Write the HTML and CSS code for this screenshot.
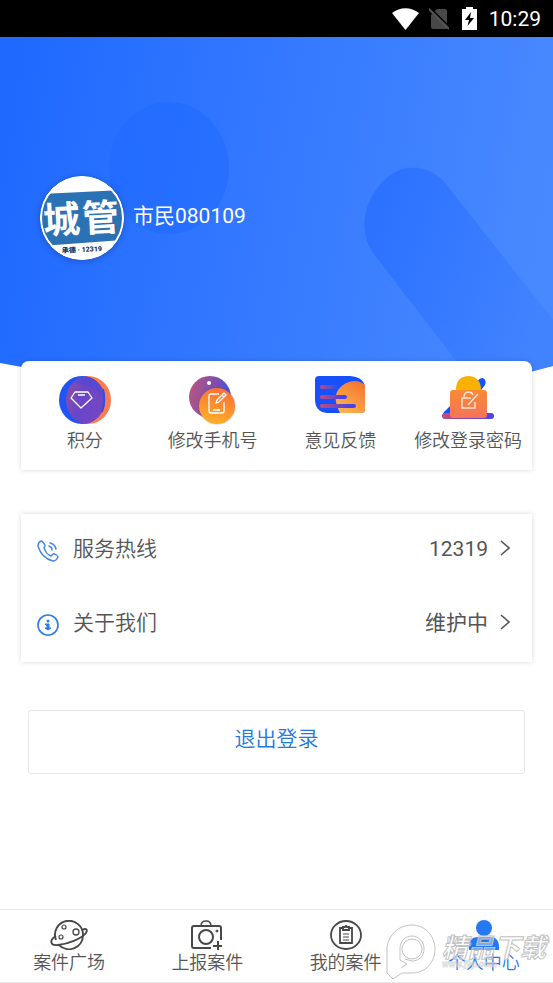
FILE: index.html
```html
<!DOCTYPE html>
<html lang="zh-CN">
<head>
  <meta charset="UTF-8">
  <meta name="viewport" content="width=device-width, initial-scale=1.0">
  <title>个人中心</title>
  <link rel="stylesheet" href="styles.css">
</head>
<body>
<div class="status-bar">
  <svg width="27" height="22" viewBox="0 0 27 22"><path d="M0 5C8-1.500 19-1.500 27 5L13.500 22Z" fill="#fff"/></svg>
  <svg class="sim" width="20" height="22" viewBox="0 0 20 22">
    <path d="M8 1H16Q18 1 18 3V21H4Q2 21 2 19V7Z" fill="#484848"/>
    <path d="M1 0L20 19" stroke="#000" stroke-width="2"/>
    <path d="M0 1L20 21" stroke="#555" stroke-width="2"/>
  </svg>
  <svg class="battery" width="15" height="23" viewBox="0 0 15 23">
    <path d="M4 0H11V2H15V23H0V2H4Z" fill="#fff"/>
    <path d="M9 5L3 13H7L5.500 19L12 11H8Z" fill="#000"/>
  </svg>
  <span>10:29</span>
</div>

<header class="hero">
  <svg class="hero-bg" viewBox="0 0 553 354" preserveAspectRatio="none">
    <defs>
      <linearGradient id="sky" gradientUnits="userSpaceOnUse" x1="0" y1="100" x2="545" y2="190">
        <stop offset="0" stop-color="#1f69ff"/>
        <stop offset="1" stop-color="#4989ff"/>
      </linearGradient>
      <linearGradient id="pill" gradientUnits="userSpaceOnUse" x1="370" y1="200" x2="545" y2="260">
        <stop offset="0" stop-color="#2c72ff"/>
        <stop offset="1" stop-color="#4182ff"/>
      </linearGradient>
    </defs>
    <path d="M0 0H553V329Q276 380 0 326Z" fill="url(#sky)"/>
    <ellipse cx="169" cy="131" rx="60" ry="66" fill="#1f69ff" opacity=".55"/>
    <path d="M450 152C431 124 398 124 379 149C360 172 360 201 376 220L457 325L475 350L553 329V283Z" fill="url(#pill)"/>
  </svg>
  <div class="user">
    <svg class="avatar" viewBox="0 0 84 84">
      <defs><clipPath id="round"><circle cx="42" cy="42" r="41"/></clipPath></defs>
      <circle cx="42" cy="42" r="42" fill="#fff"/>
      <g clip-path="url(#round)">
        <path d="M0 18L84 14V64L0 70Z" fill="#2b72b5"/>
        <g class="avatar-big" transform="rotate(-3 42 42)">
          <text x="3" y="56">城</text>
          <text x="42" y="56">管</text>
        </g>
        <text class="avatar-small" x="22" y="76" transform="rotate(-3 42 76)">承德 · 12319</text>
      </g>
      <circle cx="42" cy="42" r="41" fill="none" stroke="#fff" stroke-width="2"/>
    </svg>
    <span class="user-name">市民080109</span>
  </div>
</header>

<main>
  <nav class="card shortcuts">
    <a href="#">
      <span class="shortcut-icon">
        <svg width="52" height="48" viewBox="0 0 52 48">
          <defs>
            <linearGradient id="gem" x1="0" y1="0.200" x2="1" y2="0.500">
              <stop offset="0" stop-color="#8a4fa8"/>
              <stop offset=".4" stop-color="#6a45c8"/>
              <stop offset="1" stop-color="#7648c0"/>
            </linearGradient>
            <clipPath id="gemClip"><ellipse cx="23" cy="24" rx="23" ry="24"/></clipPath>
          </defs>
          <ellipse cx="29" cy="24" rx="23" ry="24" fill="#ff7a50"/>
          <ellipse cx="23" cy="24" rx="23" ry="24" fill="#1f54f5"/>
          <g clip-path="url(#gemClip)">
            <ellipse cx="29" cy="24" rx="22" ry="24" fill="url(#gem)"/>
            <path d="M10 0H40Q46 12 45 24Q38 8 10 6Z" fill="#3a4de4" opacity=".4"/>
          </g>
          <path d="M44 13Q47 24 43 36" fill="none" stroke="#2452f2" stroke-width="2"/>
          <path d="M16 16H29L33 22L22 32L12 22ZM19 19H26" fill="none" stroke="#fff" stroke-width="1.300" stroke-linejoin="round"/>
        </svg>
      </span>
      积分
    </a>
    <a href="#">
      <span class="shortcut-icon">
        <svg width="48" height="50" viewBox="0 0 48 50">
          <defs>
            <linearGradient id="phoneBack" x1="0" y1=".4" x2="1" y2=".6">
              <stop offset="0" stop-color="#b65582"/>
              <stop offset=".6" stop-color="#7b4daf"/>
              <stop offset="1" stop-color="#3850ee"/>
            </linearGradient>
            <linearGradient id="phoneFront" x1=".6" y1="0" x2=".3" y2="1">
              <stop offset="0" stop-color="#fc7035"/>
              <stop offset="1" stop-color="#fbb126"/>
            </linearGradient>
          </defs>
          <circle cx="21" cy="21" r="21" fill="url(#phoneBack)"/>
          <circle cx="28" cy="30" r="19" fill="#604488" opacity=".15"/>
          <circle cx="28" cy="30" r="18" fill="url(#phoneFront)"/>
          <circle cx="20" cy="7" r="2" fill="#fff"/>
          <path d="M30 18H22Q20 18 20 20V35Q20 37 22 37H33Q35 37 35 35V26M24 34H31M27 27L28 24L35 17L37 19L30 26ZM33 19L35 21" fill="none" stroke="#fff" stroke-width="1.300"/>
        </svg>
      </span>
      修改手机号
    </a>
    <a href="#">
      <span class="shortcut-icon">
        <svg width="50" height="37" viewBox="0 0 50 37">
          <defs>
            <linearGradient id="sun" x1=".8" y1="0" x2=".2" y2="1">
              <stop offset="0" stop-color="#f67431"/>
              <stop offset="1" stop-color="#fcb650"/>
            </linearGradient>
            <linearGradient id="line">
              <stop offset="0" stop-color="#c34c79"/>
              <stop offset=".8" stop-color="#4742e9"/>
            </linearGradient>
            <linearGradient id="lineFade">
              <stop offset="0" stop-color="#b74b85"/>
              <stop offset="1" stop-color="#1751ff"/>
            </linearGradient>
          </defs>
          <path d="M4 0H35Q50 1 50 13V33Q50 37 46 37H12Q0 36 0 23V4Q0 0 4 0Z" fill="#1751ff"/>
          <path d="M25 37Q15 18 28 9Q40 1 50 9V34Q50 37 47 37Z" fill="url(#sun)"/>
          <rect x="5" y="9" width="19" height="4" rx="2" fill="url(#lineFade)"/>
          <rect x="5" y="19" width="27" height="4" rx="2" fill="url(#line)"/>
          <rect x="5" y="28" width="36" height="4" rx="2" fill="url(#line)"/>
        </svg>
      </span>
      意见反馈
    </a>
    <a href="#">
      <span class="shortcut-icon">
        <svg width="52" height="43" viewBox="0 0 52 43">
          <defs>
            <linearGradient id="lock" x1="0" y1="0" x2="0" y2="1">
              <stop offset="0" stop-color="#fc8a35"/>
              <stop offset="1" stop-color="#f47358"/>
            </linearGradient>
            <linearGradient id="base">
              <stop offset="0" stop-color="#c34c79"/>
              <stop offset="1" stop-color="#4742f0"/>
            </linearGradient>
          </defs>
          <path d="M35 6Q37 2 41 2Q45 4 43 9L36 18H20L13 42H3Q-1 40 2 36L12 26L22 16Z" fill="#1751ff"/>
          <rect y="37" width="52" height="6" rx="3" fill="url(#base)"/>
          <path d="M14 14Q14 0 27 0Q39 1 39 14V18H14Z" fill="#fbb100"/>
          <rect x="8" y="14" width="37" height="28" rx="3" fill="url(#lock)"/>
          <path d="M33 26V32H20V22H29M22 21Q22 16 27 16Q30 16 31 19M26 29L36 18" fill="none" stroke="#ffe6d4" stroke-width="1.400"/>
        </svg>
      </span>
      修改登录密码
    </a>
  </nav>

  <section class="card list">
    <a href="#" class="row">
      <svg class="row-icon" viewBox="0 0 22 22" fill="none" stroke="#4a86e8" stroke-width="1.500" stroke-linejoin="round" stroke-linecap="round">
        <path d="M4 1C2 2 1 4 1 6C3 13 8 19 16 21C18 21 20 19 21 17C21 16 17 13 16 14L14 16C11 15 8 11 7 8L8 6C8 5 6 1 4 1Z"/>
        <path d="M12 6Q15 7 15 10M13 3Q18 4 19 9"/>
      </svg>
      <span class="row-title">服务热线</span>
      <span class="row-value">12319</span>
      <svg class="arrow" viewBox="0 0 10 16"><path d="M1 1L9 8L1 15" fill="none" stroke="#555" stroke-width="1.600"/></svg>
    </a>
    <a href="#" class="row">
      <svg class="row-icon" viewBox="0 0 22 22">
        <circle cx="11" cy="11" r="10" fill="none" stroke="#2f7be8" stroke-width="1.600"/>
        <circle cx="11" cy="7" r="1.500" fill="#2f7be8"/>
        <path d="M8 10H12V14H14L11 16L8 14H10V12Z" fill="#2f7be8" stroke="#2f7be8"/>
      </svg>
      <span class="row-title">关于我们</span>
      <span class="row-value">维护中</span>
      <svg class="arrow" viewBox="0 0 10 16"><path d="M1 1L9 8L1 15" fill="none" stroke="#555" stroke-width="1.600"/></svg>
    </a>
  </section>

  <button type="button" class="logout">退出登录</button>
</main>

<footer class="tab-bar">
  <a href="#">
    <svg width="38" height="30" viewBox="0 0 38 30" fill="none" stroke="#484848" stroke-width="1.900">
      <path d="M6 20A14 14 0 1 1 33 15A14 14 0 0 1 9 25"/>
      <path d="M6 16C-1 20 0 26 8 25C18 24 31 19 36 13C38 9 36 8 32 10"/>
      <circle cx="14" cy="7" r="2" stroke-width="1.200"/>
      <circle cx="26" cy="12" r="3" stroke-width="1.300"/>
      <circle cx="11" cy="17" r="2" stroke-width="1.200"/>
    </svg>
    案件广场
  </a>
  <a href="#">
    <svg width="32" height="30" viewBox="0 0 32 30" fill="none" stroke="#484848" stroke-width="2">
      <path d="M20 28H3Q1 28 1 26V8Q1 6 3 6H28Q30 6 30 8V20M27 21V30M22 26H31"/>
      <path d="M10 6Q10 1 15 1Q20 1 20 6" stroke-width="1.500"/>
      <circle cx="15" cy="17" r="7"/>
      <circle cx="26" cy="11" r="1" fill="#484848" stroke-width="1"/>
    </svg>
    上报案件
  </a>
  <a href="#">
    <svg width="32" height="30" viewBox="0 0 32 30" fill="none" stroke="#484848" stroke-width="1.800">
      <ellipse cx="16" cy="15" rx="15" ry="14"/>
      <path d="M13 8H10V23H22V8H19"/>
      <path d="M13 10V7H15Q16 5 17 7H19V10Z"/>
      <path d="M13 14H19M13 17H19M13 20H19" stroke-width="1"/>
    </svg>
    我的案件
  </a>
  <a href="#" class="active">
    <svg width="32" height="30" viewBox="0 0 32 30" fill="#2479f3">
      <circle cx="16" cy="8" r="8"/>
      <path d="M1 30Q0 17 10 17H22Q32 17 31 30Z"/>
    </svg>
    个人中心
  </a>
  <svg class="watermark" width="167" height="58" viewBox="0 0 167 58" fill="#fff" stroke="#c2c2c2">
    <path d="M1 49V23C3 10 13 1 26 1C39 1 49 12 49 25C49 39 39 49 26 49H16L7 55ZM15 44L21 40L14 36V25C14 17 19 12 26 12C33 12 38 18 38 25C38 32 33 37 26 37L19 35" fill-opacity=".5"/>
    <circle cx="26" cy="25" r="10" fill-opacity=".5"/>
    <text class="mark-name" x="56" y="33">精品下载</text>
    <text class="mark-url" x="56" y="43">www.j9p.com</text>
  </svg>
</footer>
</body>
</html>
```

FILE: styles.css
```css
* {
  box-sizing: border-box;
}
body {
  margin: 0;
  min-height: 100vh;
  display: flex;
  flex-direction: column;
  font-family: Roboto, "Noto Sans CJK SC", sans-serif;
  font-size: 21px;
  font-weight: 350;
  line-height: 30px;
  color: #555;
  background-color: #fff;
}
a {
  color: inherit;
  text-decoration: none;
}
svg {
  display: block;
  flex: none;
}
.status-bar {
  display: flex;
  justify-content: flex-end;
  align-items: center;
  height: 37px;
  padding-right: 12px;
  background-color: #000;
  color: #fff;
  font-weight: 400;
}
.sim {
  margin-left: 10px;
}
.battery {
  margin: 0 12px 0 13px;
}
.hero {
  position: relative;
  height: 354px;
  padding: 139px 40px 0;
}
.hero-bg {
  position: absolute;
  top: 0;
  left: 0;
  width: 100%;
  height: 100%;
}
.user {
  position: relative;
  display: flex;
  align-items: center;
  gap: 9px;
  color: #fff;
}
.avatar {
  width: 84px;
  height: 84px;
  border-radius: 50%;
  box-shadow: 0 1px 6px rgba(0, 0, 0, 0.25);
}
.avatar-big {
  font-size: 37px;
  font-weight: 700;
  fill: #fff;
}
.avatar-small {
  font-size: 7px;
  font-weight: 900;
  fill: #173a66;
}
.user-name {
  padding-bottom: 4px;
  font-weight: 400;
}
main {
  position: relative;
  margin: -30px 21px 0;
}
.card {
  background-color: #fff;
  box-shadow: 0 0 5px rgba(0, 0, 0, 0.16);
}
.shortcuts {
  display: grid;
  grid-template-columns: repeat(4, 1fr);
  padding: 15px 0 16px;
  border-radius: 8px 8px 0 0;
  font-size: 18px;
  line-height: 26px;
}
.shortcuts a {
  display: flex;
  flex-direction: column;
  align-items: center;
  gap: 4px;
  white-space: nowrap;
}
.shortcut-icon {
  height: 48px;
}
.list {
  margin-top: 44px;
}
.row {
  display: flex;
  align-items: center;
  height: 74px;
  padding: 0 22px 0 16px;
}
.row span {
  padding-bottom: 4px;
}
.row-icon {
  width: 22px;
  height: 22px;
}
.row-title {
  flex: 1;
  margin-left: 14px;
}
.row-value {
  font-weight: 400;
}
.arrow {
  width: 10px;
  height: 16px;
  margin: 0 0 6px 12px;
}
.logout {
  display: block;
  width: calc(100% - 14px);
  height: 64px;
  margin: 48px 7px 40px;
  padding: 0 0 6px;
  border: 1px solid #e8e8e8;
  border-radius: 3px;
  background-color: #fff;
  color: #2479e3;
  font: inherit;
  cursor: pointer;
}
.tab-bar {
  position: relative;
  display: flex;
  height: 74px;
  margin-top: auto;
  padding-top: 10px;
  border-top: 1px solid #e8e8e8;
  border-bottom: 1px solid #e8e8e8;
  font-size: 18px;
  line-height: 26px;
}
.tab-bar a {
  flex: 1;
  display: flex;
  flex-direction: column;
  align-items: center;
}
.tab-bar .active {
  color: #2479f3;
}
.watermark {
  position: absolute;
  right: 0;
  bottom: 0;
  pointer-events: none;
}
.mark-name {
  font-size: 26px;
  font-weight: 700;
  font-style: italic;
  fill-opacity: 0.4;
}
.mark-url {
  font-size: 9px;
  font-weight: 700;
  stroke-opacity: 0.5;
  fill-opacity: 0.4;
}
```
